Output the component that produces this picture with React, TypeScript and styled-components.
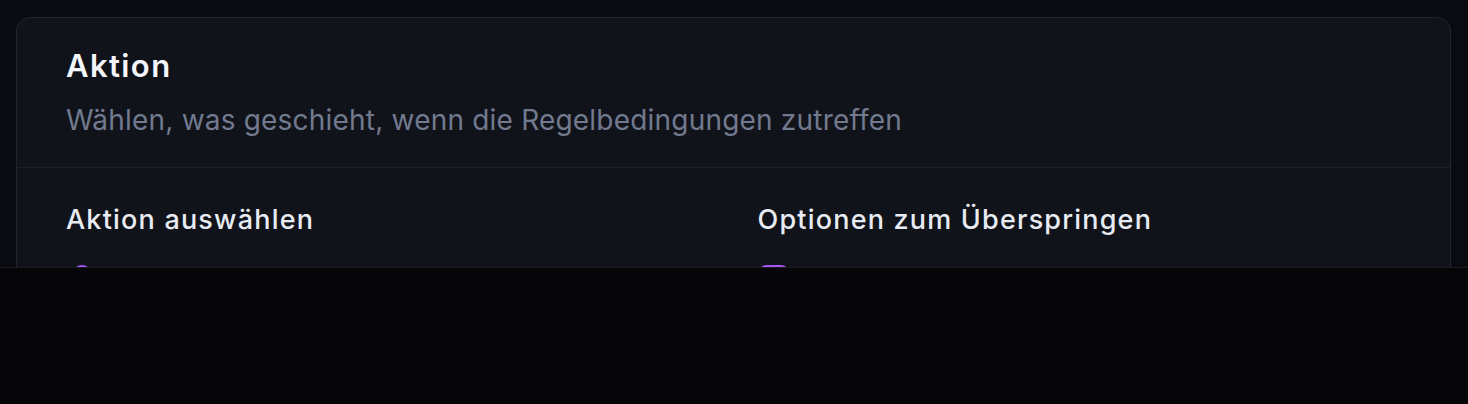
import React from 'react';
import styled, { createGlobalStyle } from 'styled-components';

const GlobalStyle = createGlobalStyle`
  html, body {
    margin: 0;
    padding: 0;
    background: #0a0b10;
    font-family: Inter, 'Liberation Sans', sans-serif;
    overflow: hidden;
  }
`;

const Page = styled.div`
  padding: 17px 17px 0 16px;
  height: 404px;
  box-sizing: border-box;
`;

const Card = styled.section`
  background: #11131b;
  border: 1px solid #23252e;
  border-radius: 14px;
`;

const Header = styled.div`
  padding: 28px 49px 29px;
  border-bottom: 1px solid #1e2029;
`;

const Title = styled.h2`
  margin: 0;
  font-size: 31px;
  line-height: 40px;
  font-weight: 600;
  letter-spacing: 1.4px;
  color: #f4f6fb;
`;

const Subtitle = styled.p`
  margin: 16px 0 0;
  font-size: 28px;
  line-height: 36px;
  letter-spacing: 0.2px;
  color: #717a8e;
`;

const Body = styled.div`
  padding: 34px 49px 32px;
  display: grid;
  grid-template-columns: 1fr 1fr;
  column-gap: 48px;
`;

const Column = styled.div`
  display: flex;
  flex-direction: column;
  gap: 27px;
`;

const Label = styled.h3`
  margin: 0;
  font-size: 27px;
  line-height: 36px;
  font-weight: 500;
  letter-spacing: 1.2px;
  color: #e8ebf2;
`;

const OptionRow = styled.div<{ inset?: boolean }>`
  display: flex;
  align-items: center;
  gap: 12px;
  padding-left: ${(p) => (p.inset ? '6px' : '0')};
`;

const Radio = styled.span`
  width: 20px;
  height: 20px;
  border-radius: 50%;
  border: 2px solid #a855f7;
  box-sizing: border-box;
  display: flex;
  align-items: center;
  justify-content: center;

  &::after {
    content: '';
    width: 10px;
    height: 10px;
    border-radius: 50%;
    background: #a855f7;
  }
`;

const Switch = styled.span<{ on: boolean }>`
  width: 32px;
  height: 18px;
  border-radius: 9px;
  background: ${(p) => (p.on ? '#a855f7' : '#2a2d38')};
`;

const Footer = styled.footer`
  position: fixed;
  left: 0;
  right: 0;
  bottom: 0;
  height: 136px;
  background: #060609;
  border-top: 1px solid #1a1b21;
`;

export default function App() {
  return (
    <>
      <GlobalStyle />
      <Page>
        <Card>
          <Header>
            <Title>Aktion</Title>
            <Subtitle>Wählen, was geschieht, wenn die Regelbedingungen zutreffen</Subtitle>
          </Header>
          <Body>
            <Column>
              <Label>Aktion auswählen</Label>
              <OptionRow inset>
                <Radio />
              </OptionRow>
            </Column>
            <Column>
              <Label>Optionen zum Überspringen</Label>
              <OptionRow>
                <Switch on />
              </OptionRow>
            </Column>
          </Body>
        </Card>
      </Page>
      <Footer />
    </>
  );
}
